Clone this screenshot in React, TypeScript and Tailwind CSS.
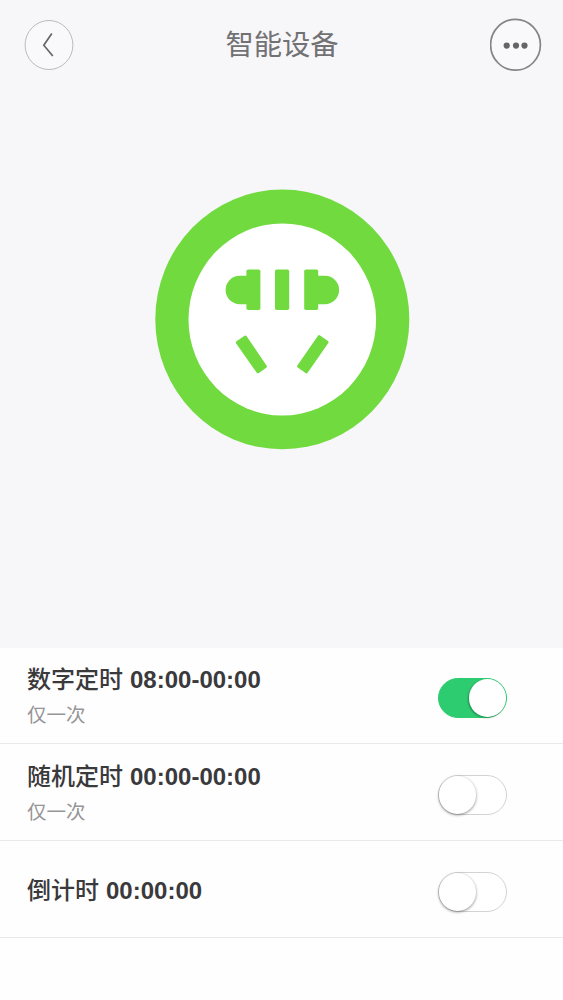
import React, { useState } from 'react';

interface Timer {
  id: string;
  label: string;
  time: string;
  repeat?: string;
  enabled: boolean;
}

interface TimerRowProps {
  timer: Timer;
  onToggle: (id: string) => void;
}

const initialTimers: Timer[] = [
  { id: 'digital', label: '数字定时', time: '08:00-00:00', repeat: '仅一次', enabled: true },
  { id: 'random', label: '随机定时', time: '00:00-00:00', repeat: '仅一次', enabled: false },
  { id: 'countdown', label: '倒计时', time: '00:00:00', enabled: false },
];

const SocketIcon: React.FC = () => (
  <svg width="255" height="261" viewBox="155 189 255 261" className="block">
    <ellipse cx="282.3" cy="319.4" rx="127" ry="129.9" fill="#70da3f" />
    <ellipse cx="282.3" cy="319.5" rx="93.8" ry="96" fill="#ffffff" />
    <g fill="#70da3f">
      <path d="M239.7 275.8h8v28.4h-8a14.1 14.2 0 0 1 0-28.4z" />
      <rect x="246.4" y="269.5" width="14" height="40.6" rx="1.8" />
      <rect x="275" y="269.5" width="14.2" height="40.6" rx="1.8" />
      <rect x="304.2" y="269.5" width="14" height="40.6" rx="1.8" />
      <path d="M317 275.8h8a14.1 14.2 0 0 1 0 28.4h-8z" />
    </g>
    <g fill="#70da3f" stroke="#70da3f" strokeWidth="3" strokeLinejoin="round">
      <path d="M237.4 342.6l8-5.6 20 29.6-7.4 5.3z" />
      <path d="M327.1 342.2l-7.9-5.6-20.6 29.7 7.8 5.5z" />
    </g>
  </svg>
);

const Toggle: React.FC<{ checked: boolean; onChange: () => void }> = ({ checked, onChange }) => (
  <button
    role="switch"
    aria-checked={checked}
    onClick={onChange}
    className={`mt-1.5 flex h-10 w-[69px] shrink-0 items-center rounded-full border ${
      checked ? 'justify-end border-[#2ecc71] bg-[#2ecc71]' : 'justify-start border-[#d3d2d5] bg-white'
    }`}
  >
    <span
      className={`h-[38px] w-[37px] rounded-full bg-white ${
        checked
          ? 'shadow-[-1px_1px_2px_rgba(0,0,0,0.3)]'
          : 'shadow-[0_1px_3px_rgba(0,0,0,0.45)]'
      }`}
    />
  </button>
);

const TimerRow: React.FC<TimerRowProps> = ({ timer, onToggle }) => (
  <div className="flex h-[97px] items-center justify-between border-b border-[#e9e8ec] pr-14 pl-[27px]">
    <div className="flex flex-col gap-[3px]">
      <div className="flex items-center gap-[7px] text-[24px] leading-[34px] text-[#3a393b]">
        <span className="font-['Noto_Sans_CJK_SC',sans-serif] font-medium">{timer.label}</span>
        <span className="mt-0.5 -mb-0.5 font-['Liberation_Sans',sans-serif] font-bold">
          {timer.time}
        </span>
      </div>
      {timer.repeat && (
        <p className="font-['Noto_Sans_CJK_SC',sans-serif] text-[19.5px] leading-8 text-[#969597]">
          {timer.repeat}
        </p>
      )}
    </div>
    <Toggle checked={timer.enabled} onChange={() => onToggle(timer.id)} />
  </div>
);

const App: React.FC = () => {
  const [timers, setTimers] = useState<Timer[]>(initialTimers);

  const handleToggle = (id: string) => {
    setTimers((prev) => prev.map((t) => (t.id === id ? { ...t, enabled: !t.enabled } : t)));
  };

  return (
    <div className="flex h-[1000px] w-[563px] flex-col overflow-hidden bg-[#fefefe]">
      <div className="flex h-[648px] flex-col bg-[#f7f6f9]">
        <header className="flex h-[90px] items-center justify-between pr-[21px] pl-[24px]">
          <button aria-label="返回">
            <svg width="50" height="52" viewBox="0 0 50 52" fill="none" className="block">
              <ellipse cx="25" cy="26" rx="23.9" ry="24.5" fill="#f9f8fa" stroke="#bcbabd" />
              <path d="M27.8 14.5L19.8 26.2l9 10.8" stroke="#666567" strokeWidth="1.7" />
            </svg>
          </button>
          <h1 className="pb-1 font-['Noto_Sans_CJK_SC',sans-serif] text-[28.3px] leading-[42px] text-[#727173]">
            智能设备
          </h1>
          <button aria-label="更多">
            <svg width="52" height="54" viewBox="0 0 52 54" fill="none" className="block">
              <ellipse cx="25.5" cy="26.8" rx="24.9" ry="25.4" fill="#f9f8fa" stroke="#858486" strokeWidth="1.7" />
              <g fill="#656466">
                <circle cx="16.7" cy="27.6" r="3.1" />
                <circle cx="26" cy="27.6" r="3.1" />
                <circle cx="34.5" cy="27.6" r="3.1" />
              </g>
            </svg>
          </button>
        </header>
        <div className="flex justify-center pt-[99px] pl-0.5">
          <SocketIcon />
        </div>
      </div>
      <main className="-mt-px flex flex-col">
        {timers.map((timer) => (
          <TimerRow key={timer.id} timer={timer} onToggle={handleToggle} />
        ))}
      </main>
    </div>
  );
};

export default App;
